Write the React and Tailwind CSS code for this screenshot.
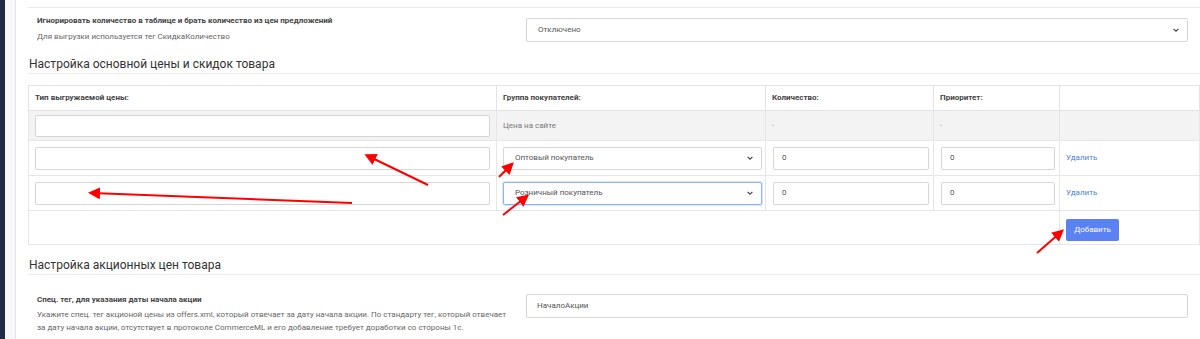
import React from 'react';

const font = { fontFamily: 'Roboto, "Liberation Sans", sans-serif' };

const Chevron = () => (
  <svg width="8" height="8" viewBox="0 0 10 10" className="absolute right-[7px] top-1/2 -translate-y-1/2">
    <path d="M2 3.5 L5 6.5 L8 3.5" fill="none" stroke="#444" strokeWidth="1.5" />
  </svg>
);

const SelectBox = ({ value, focused, className }) => (
  <div
    className={`relative flex items-center bg-white rounded-[2px] pl-[11px] text-[8px] text-[#555] border ${
      focused ? 'border-[#8ab4f8] shadow-[0_0_0_1px_rgba(120,160,240,0.25)]' : 'border-[#d6d6d6]'
    } ${className}`}
  >
    {value}
    <Chevron />
  </div>
);

const InputBox = ({ value, className }) => (
  <div className={`flex items-center bg-white border border-[#d6d6d6] rounded-[2px] pl-[8px] text-[8px] text-[#555] ${className}`}>
    {value}
  </div>
);

const Arrows = () => (
  <svg className="absolute inset-0 pointer-events-none" width="1200" height="339">
    <defs>
      <marker id="ah" markerWidth="6" markerHeight="6" refX="4" refY="3" orient="auto">
        <path d="M0 0 L6 3 L0 6 Z" fill="#f00" />
      </marker>
    </defs>
    <g stroke="#f00" strokeWidth="2" fill="none" markerEnd="url(#ah)">
      <line x1="428" y1="185" x2="368" y2="156" />
      <line x1="352" y1="203" x2="92" y2="193" />
      <line x1="499" y1="177" x2="511" y2="165" />
      <line x1="503" y1="215" x2="526" y2="197" />
      <line x1="1037" y1="253" x2="1061" y2="232" />
    </g>
  </svg>
);

const Th = ({ children }) => (
  <th className="border border-[#e3e3e3] text-left font-bold text-[8px] leading-none text-[#444] px-[6px]">
    {children}
  </th>
);

const Td = ({ children, className = '' }) => (
  <td className={`border border-[#e6e6e6] pl-[6px] pr-[4px] leading-none ${className}`}>{children}</td>
);

export default function App() {
  return (
    <div className="relative flex h-[339px] w-[1200px] overflow-hidden bg-white" style={font}>
      <div className="w-[5px] bg-[#1f2a46]" />
      <div className="w-[11px] bg-[#f6f7f9] border-r border-[#e6e6e6]" />
      <main className="flex-1 pl-[12px]">
        <div className="mt-[7px] border-t border-[#e8e8e8]" />
        <div className="flex pt-[7px]">
          <div className="w-[498px] pl-[9px]">
            <div className="text-[8px] font-bold text-[#444] leading-[12px]">
              Игнорировать количество в таблице и брать количество из цен предложений
            </div>
            <div className="text-[8px] text-[#666] leading-[12px] mt-[4px]">
              Для выгрузки используется тег СкидкаКоличество
            </div>
          </div>
          <SelectBox value="Отключено" className="w-[662px] h-[24px] mt-[3px]" />
        </div>

        <div className="mt-[13px] text-[12px] text-[#333] leading-[16px] pl-[1px] pb-[1px] border-b border-[#ececec]">
          Настройка основной цены и скидок товара
        </div>

        <table className="mt-[11px] w-[1171px] border-collapse table-fixed">
          <colgroup>
            <col className="w-[468px]" />
            <col className="w-[269px]" />
            <col className="w-[168px]" />
            <col className="w-[126px]" />
            <col className="w-[140px]" />
          </colgroup>
          <thead>
            <tr className="h-[25px]">
              <Th>Тип выгружаемой цены:</Th>
              <Th>Группа покупателей:</Th>
              <Th>Количество:</Th>
              <Th>Приоритет:</Th>
              <Th />
            </tr>
          </thead>
          <tbody>
            <tr className="bg-[#f3f3f3] h-[30px]">
              <Td className="!pr-[6px]">
                <InputBox className="h-[22px]" />
              </Td>
              <Td className="text-[8px] text-[#777]">Цена на сайте</Td>
              <Td className="text-[8px] text-[#aaa]">-</Td>
              <Td className="text-[8px] text-[#aaa]">-</Td>
              <Td />
            </tr>
            <tr className="h-[35px]">
              <Td className="!pr-[6px]">
                <InputBox className="h-[23px]" />
              </Td>
              <Td className="!pr-[3px]">
                <SelectBox value="Оптовый покупатель" className="h-[23px]" />
              </Td>
              <Td className="!pl-[7px]">
                <InputBox value="0" className="h-[23px]" />
              </Td>
              <Td className="!pl-[7px]">
                <InputBox value="0" className="h-[23px]" />
              </Td>
              <Td className="text-[8px] text-[#4a84d6]">Удалить</Td>
            </tr>
            <tr className="h-[35px]">
              <Td className="!pr-[6px]">
                <InputBox className="h-[23px]" />
              </Td>
              <Td className="!pr-[3px]">
                <SelectBox value="Розничный покупатель" focused className="h-[23px]" />
              </Td>
              <Td className="!pl-[7px]">
                <InputBox value="0" className="h-[23px]" />
              </Td>
              <Td className="!pl-[7px]">
                <InputBox value="0" className="h-[23px]" />
              </Td>
              <Td className="text-[8px] text-[#4a84d6]">Удалить</Td>
            </tr>
            <tr className="h-[34px]">
              <td colSpan={4} className="border border-[#e6e6e6] border-r-0" />
              <td className="border border-[#e6e6e6] px-[6px]">
                <button className="h-[22px] w-[53px] bg-[#5b82f5] text-white text-[8px] rounded-[2px]">
                  Добавить
                </button>
              </td>
            </tr>
          </tbody>
        </table>

        <div className="mt-[12px] text-[12px] text-[#333] leading-[16px] pl-[1px] pb-[1px] border-b border-[#ececec]">
          Настройка акционных цен товара
        </div>
        <div className="flex pt-[19px]">
          <div className="w-[498px] pl-[9px]">
            <div className="text-[8px] font-bold text-[#444] leading-[12px]">
              Спец. тег, для указания даты начала акции
            </div>
            <div className="text-[8px] text-[#666] leading-[13px] mt-[2px]">
              Укажите спец. тег акционой цены из offers.xml, который отвечает за дату начала акции. По стандарту тег, который отвечает
              <br />
              за дату начала акции, отсутствует в протоколе CommerceML и его добавление требует доработки со стороны 1с.
            </div>
          </div>
          <InputBox value="НачалоАкции" className="w-[662px] h-[24px] !pl-[10px]" />
        </div>
      </main>
      <Arrows />
    </div>
  );
}
